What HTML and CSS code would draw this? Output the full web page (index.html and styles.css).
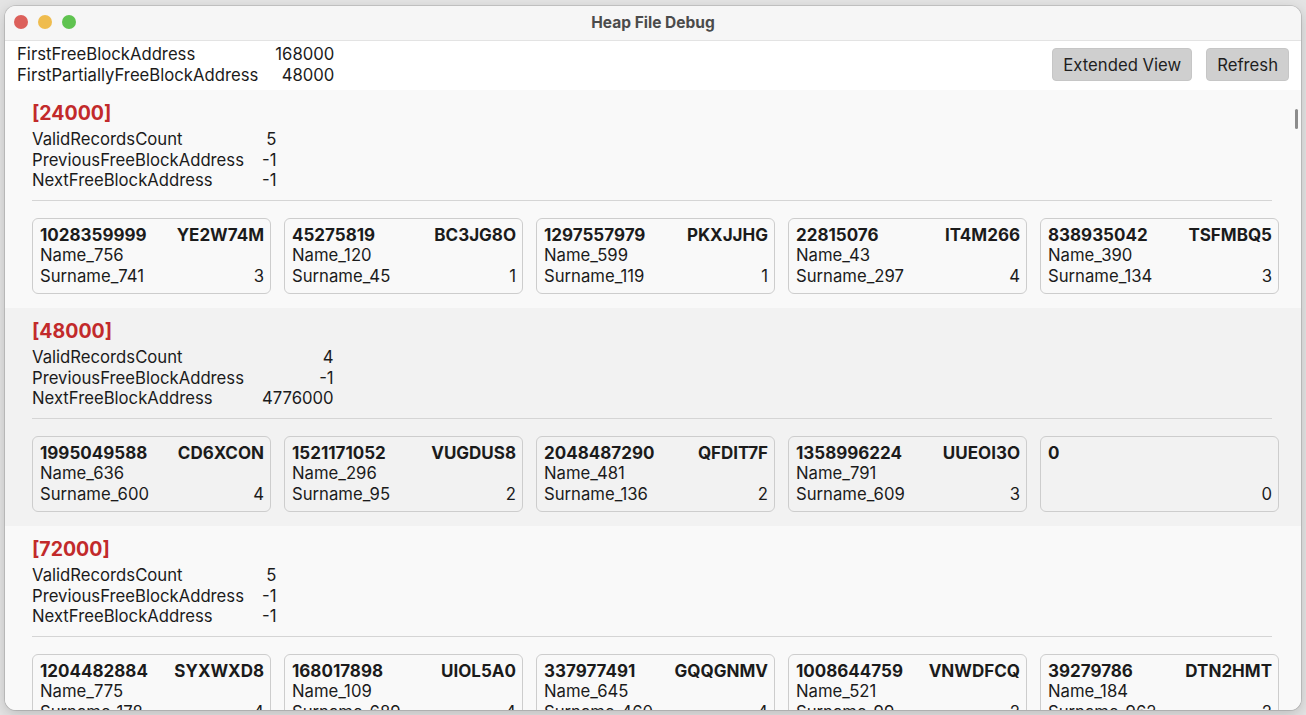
FILE: index.html
```html
<!DOCTYPE html>
<html>
<head>
<meta charset="utf-8">
<link rel="stylesheet" href="styles.css">
</head>
<body>
<div class="window">
  <div class="titlebar">
    <div class="lights">
      <span class="light red"></span>
      <span class="light yellow"></span>
      <span class="light green"></span>
    </div>
    <div class="title">Heap File Debug</div>
  </div>
  <div class="header">
    <div class="kv header-kv">
      <span>FirstFreeBlockAddress</span><span class="val">168000</span>
      <span>FirstPartiallyFreeBlockAddress</span><span class="val">48000</span>
    </div>
    <div class="buttons">
      <button class="btn">Extended View</button>
      <button class="btn">Refresh</button>
    </div>
  </div>
  <div class="scroll">
    <div class="scrollbar"></div>

    <section class="block light-bg">
      <div class="block-title">[24000]</div>
      <div class="kv">
        <span>ValidRecordsCount</span><span class="val">5</span>
        <span>PreviousFreeBlockAddress</span><span class="val">-1</span>
        <span>NextFreeBlockAddress</span><span class="val">-1</span>
      </div>
      <hr class="divider">
      <div class="cards">
        <div class="card"><div class="row b"><span>1028359999</span><span>YE2W74M</span></div><div class="row"><span>Name_756</span></div><div class="row"><span>Surname_741</span><span>3</span></div></div>
        <div class="card"><div class="row b"><span>45275819</span><span>BC3JG8O</span></div><div class="row"><span>Name_120</span></div><div class="row"><span>Surname_45</span><span>1</span></div></div>
        <div class="card"><div class="row b"><span>1297557979</span><span>PKXJJHG</span></div><div class="row"><span>Name_599</span></div><div class="row"><span>Surname_119</span><span>1</span></div></div>
        <div class="card"><div class="row b"><span>22815076</span><span>IT4M266</span></div><div class="row"><span>Name_43</span></div><div class="row"><span>Surname_297</span><span>4</span></div></div>
        <div class="card"><div class="row b"><span>838935042</span><span>TSFMBQ5</span></div><div class="row"><span>Name_390</span></div><div class="row"><span>Surname_134</span><span>3</span></div></div>
      </div>
    </section>

    <section class="block dark-bg">
      <div class="block-title">[48000]</div>
      <div class="kv">
        <span>ValidRecordsCount</span><span class="val">4</span>
        <span>PreviousFreeBlockAddress</span><span class="val">-1</span>
        <span>NextFreeBlockAddress</span><span class="val">4776000</span>
      </div>
      <hr class="divider">
      <div class="cards">
        <div class="card"><div class="row b"><span>1995049588</span><span>CD6XCON</span></div><div class="row"><span>Name_636</span></div><div class="row"><span>Surname_600</span><span>4</span></div></div>
        <div class="card"><div class="row b"><span>1521171052</span><span>VUGDUS8</span></div><div class="row"><span>Name_296</span></div><div class="row"><span>Surname_95</span><span>2</span></div></div>
        <div class="card"><div class="row b"><span>2048487290</span><span>QFDIT7F</span></div><div class="row"><span>Name_481</span></div><div class="row"><span>Surname_136</span><span>2</span></div></div>
        <div class="card"><div class="row b"><span>1358996224</span><span>UUEOI3O</span></div><div class="row"><span>Name_791</span></div><div class="row"><span>Surname_609</span><span>3</span></div></div>
        <div class="card"><div class="row b"><span>0</span><span></span></div><div class="row"><span>&nbsp;</span></div><div class="row"><span></span><span>0</span></div></div>
      </div>
    </section>

    <section class="block light-bg">
      <div class="block-title">[72000]</div>
      <div class="kv">
        <span>ValidRecordsCount</span><span class="val">5</span>
        <span>PreviousFreeBlockAddress</span><span class="val">-1</span>
        <span>NextFreeBlockAddress</span><span class="val">-1</span>
      </div>
      <hr class="divider">
      <div class="cards">
        <div class="card"><div class="row b"><span>1204482884</span><span>SYXWXD8</span></div><div class="row"><span>Name_775</span></div><div class="row"><span>Surname_178</span><span>4</span></div></div>
        <div class="card"><div class="row b"><span>168017898</span><span>UIOL5A0</span></div><div class="row"><span>Name_109</span></div><div class="row"><span>Surname_689</span><span>4</span></div></div>
        <div class="card"><div class="row b"><span>337977491</span><span>GQQGNMV</span></div><div class="row"><span>Name_645</span></div><div class="row"><span>Surname_460</span><span>4</span></div></div>
        <div class="card"><div class="row b"><span>1008644759</span><span>VNWDFCQ</span></div><div class="row"><span>Name_521</span></div><div class="row"><span>Surname_99</span><span>2</span></div></div>
        <div class="card"><div class="row b"><span>39279786</span><span>DTN2HMT</span></div><div class="row"><span>Name_184</span></div><div class="row"><span>Surname_962</span><span>2</span></div></div>
      </div>
    </section>
  </div>
</div>
</body>
</html>
```
FILE: styles.css
```css
* { box-sizing: border-box; }
html, body { margin: 0; height: 100%; }
body {
  background: #e4e4e4;
  padding: 6px 5px 5px 5px;
  font-family: Inter, "Noto Sans", sans-serif;
  color: #1b1b1b;
  overflow: hidden;
}
.window {
  width: 1296px;
  height: 704px;
  background: #f9f9f9;
  border-radius: 11px;
  overflow: hidden;
  display: flex;
  flex-direction: column;
  box-shadow: 0 0 0 1px rgba(0,0,0,0.12), 0 4px 14px rgba(0,0,0,0.18);
}
.titlebar {
  height: 35px;
  flex: none;
  background: #f6f6f6;
  border-bottom: 1px solid #e3e3e3;
  display: flex;
  align-items: center;
  justify-content: center;
  position: relative;
}
.lights {
  position: absolute;
  left: 9px;
  top: 9px;
  display: flex;
  gap: 10px;
}
.light { width: 14px; height: 14px; border-radius: 50%; display: block; }
.red { background: #dc605b; }
.yellow { background: #efbc4e; }
.green { background: #5fc350; }
.title {
  font-size: 15.5px;
  font-weight: 700;
  color: #4b4b4b;
  margin-top: -1px;
}
.header {
  flex: none;
  height: 49px;
  background: #ffffff;
  display: flex;
  justify-content: space-between;
  align-items: flex-start;
  padding: 3px 12px 0 12px;
}
.kv {
  display: grid;
  grid-template-columns: auto auto;
  column-gap: 18px;
  justify-content: start;
  font-size: 16.7px;
  line-height: 20.5px;
}
.header-kv { column-gap: 17px; }
.kv .val { text-align: right; }
.buttons {
  display: flex;
  gap: 14px;
  margin-top: 4px;
}
.btn {
  font-family: Inter, "Noto Sans", sans-serif;
  font-size: 16.7px;
  color: #1e1e1e;
  background: #cfcfcf;
  border: 1px solid #c6c6c6;
  border-radius: 4px;
  height: 33px;
  padding: 0 10px;
}
.scroll {
  flex: 1;
  overflow: hidden;
  position: relative;
}
.scrollbar {
  position: absolute;
  right: 3px;
  top: 19px;
  width: 3px;
  height: 20px;
  border-radius: 2px;
  background: #8c8c8c;
}
.block {
  padding: 10px 22px 14px 27px;
}
.light-bg { background: #f9f9f9; }
.dark-bg { background: #f2f2f2; }
.block-title {
  color: #c22a2b;
  font-weight: 700;
  font-size: 19.5px;
  line-height: 26px;
  margin-bottom: 3px;
}
.divider {
  border: 0;
  border-top: 1px solid #d5d5d5;
  margin: 9px 7px 17px 0;
}
.cards {
  display: grid;
  grid-template-columns: repeat(5, 1fr);
  column-gap: 13px;
}
.card {
  border: 1px solid #cdcdcd;
  border-radius: 6px;
  padding: 6px 6px 7px 7px;
  font-size: 16.7px;
  line-height: 20.5px;
}
.row { display: flex; justify-content: space-between; }
.row.b { font-weight: 700; font-size: 17px; }
```
